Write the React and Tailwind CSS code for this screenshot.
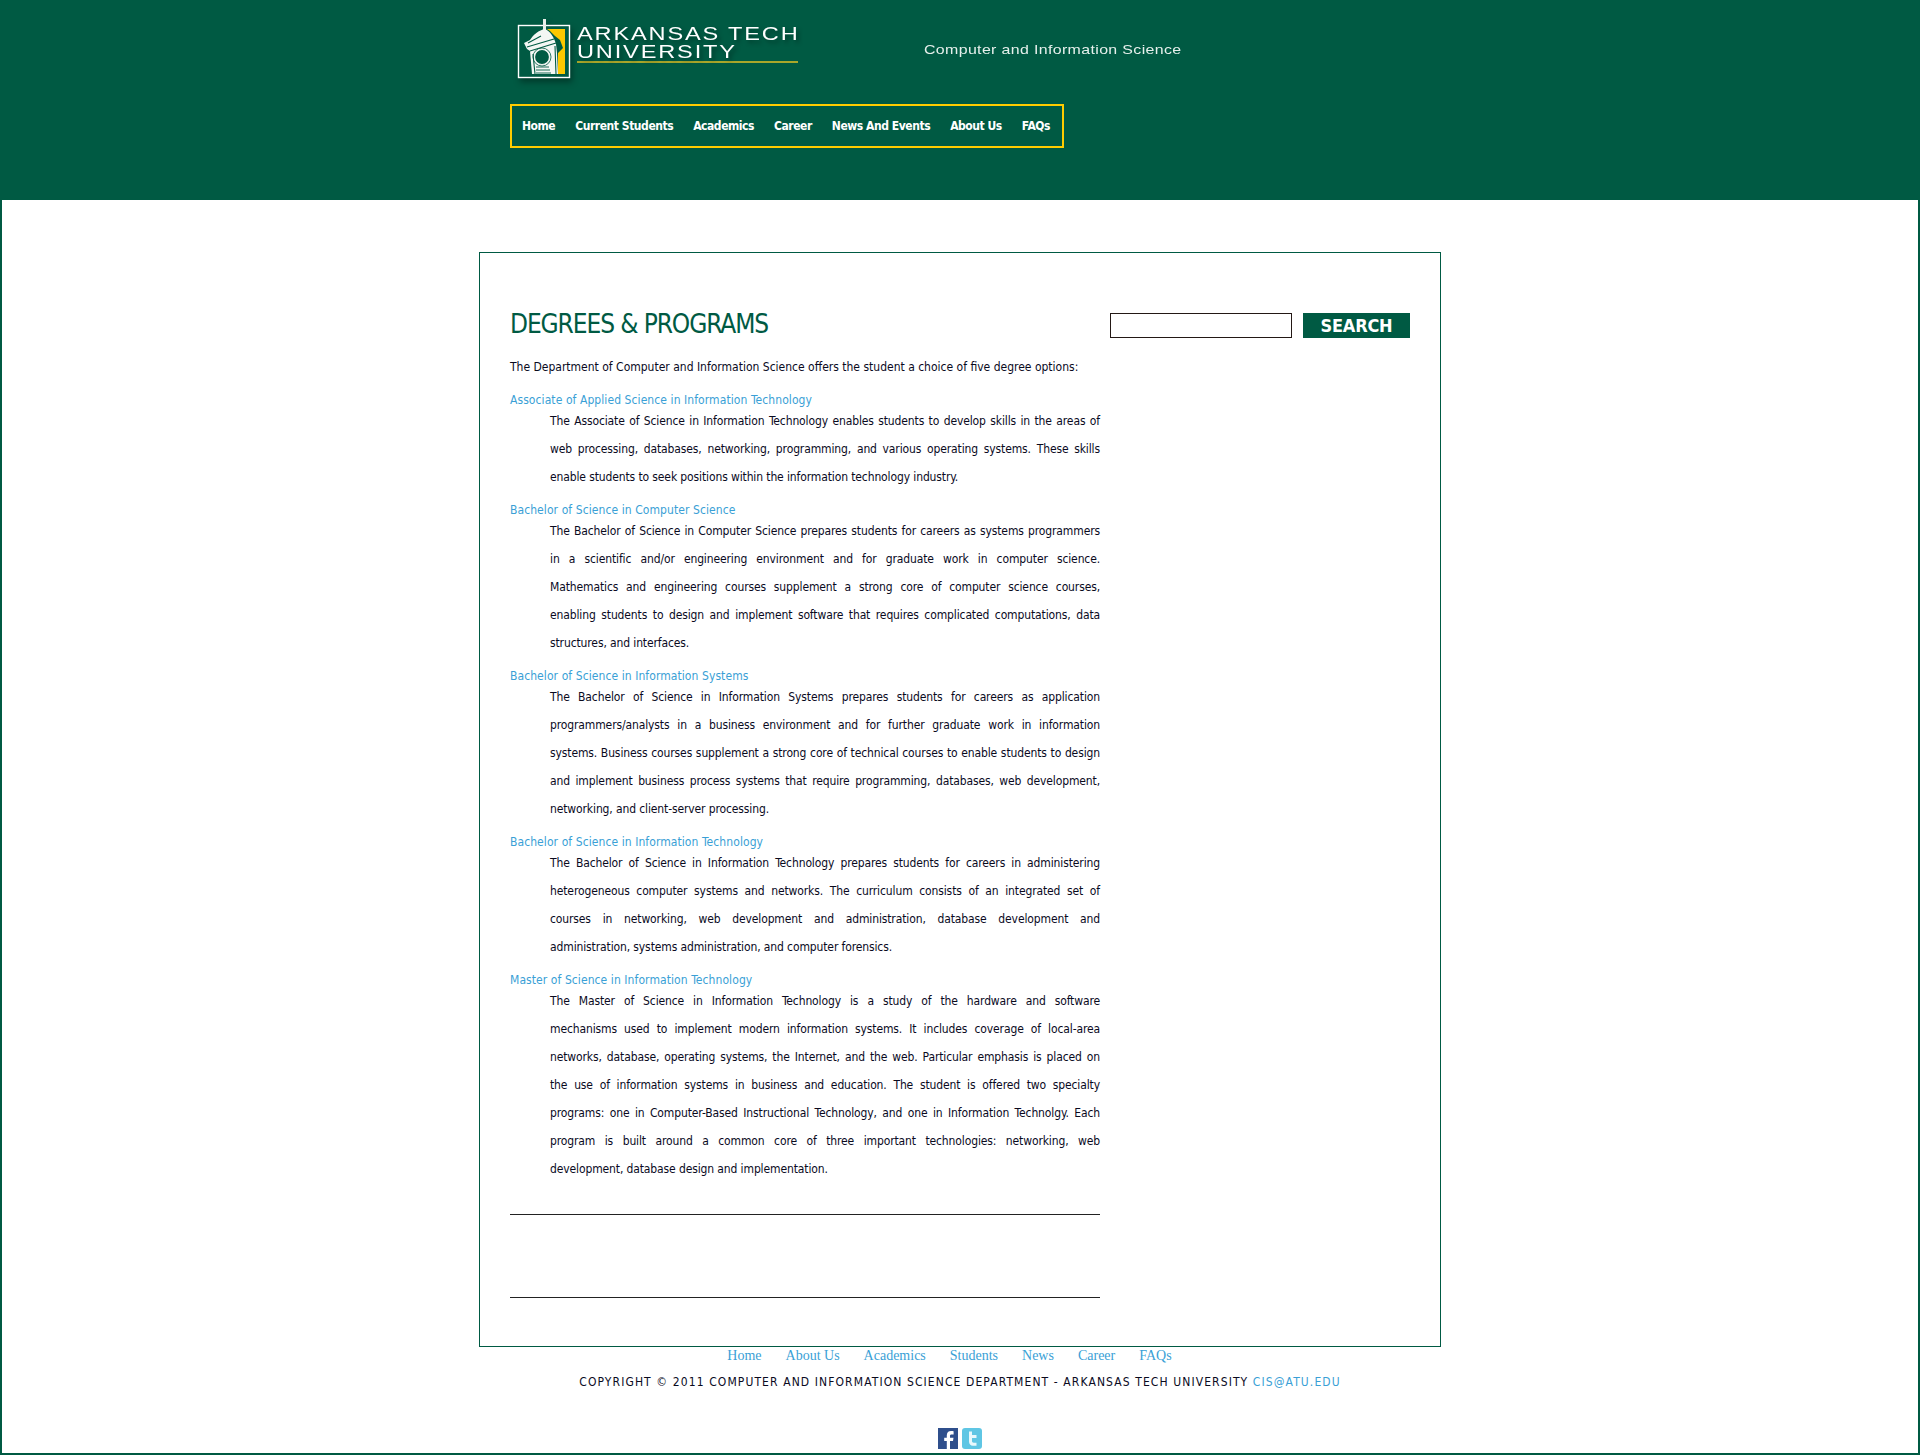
const navLinks = ['Home', 'Current Students', 'Academics', 'Career', 'News And Events', 'About Us', 'FAQs'];
const footerLinks = ['Home', 'About Us', 'Academics', 'Students', 'News', 'Career', 'FAQs'];

const programs = [
  {
    title: 'Associate of Applied Science in Information Technology',
    lines: [
      'The Associate of Science in Information Technology enables students to develop skills in the areas of',
      'web processing, databases, networking, programming, and various operating systems. These skills',
      'enable students to seek positions within the information technology industry.',
    ],
  },
  {
    title: 'Bachelor of Science in Computer Science',
    lines: [
      'The Bachelor of Science in Computer Science prepares students for careers as systems programmers',
      'in a scientific and/or engineering environment and for graduate work in computer science.',
      'Mathematics and engineering courses supplement a strong core of computer science courses,',
      'enabling students to design and implement software that requires complicated computations, data',
      'structures, and interfaces.',
    ],
  },
  {
    title: 'Bachelor of Science in Information Systems',
    lines: [
      'The Bachelor of Science in Information Systems prepares students for careers as application',
      'programmers/analysts in a business environment and for further graduate work in information',
      'systems. Business courses supplement a strong core of technical courses to enable students to design',
      'and implement business process systems that require programming, databases, web development,',
      'networking, and client-server processing.',
    ],
  },
  {
    title: 'Bachelor of Science in Information Technology',
    lines: [
      'The Bachelor of Science in Information Technology prepares students for careers in administering',
      'heterogeneous computer systems and networks. The curriculum consists of an integrated set of',
      'courses in networking, web development and administration, database development and',
      'administration, systems administration, and computer forensics.',
    ],
  },
  {
    title: 'Master of Science in Information Technology',
    lines: [
      'The Master of Science in Information Technology is a study of the hardware and software',
      'mechanisms used to implement modern information systems. It includes coverage of local-area',
      'networks, database, operating systems, the Internet, and the web. Particular emphasis is placed on',
      'the use of information systems in business and education. The student is offered two specialty',
      'programs: one in Computer-Based Instructional Technology, and one in Information Technolgy. Each',
      'program is built around a common core of three important technologies: networking, web',
      'development, database design and implementation.',
    ],
  },
];

function TowerLogo() {
  return (
    <svg width="64" height="68" viewBox="0 0 64 68" className="shrink-0 drop-shadow-[2px_4px_3px_rgba(0,0,0,0.35)]">
      <rect x="6.500" y="9.500" width="51" height="52" fill="#005a43" stroke="#fff" strokeWidth="1.400" />
      <path d="M35 13h18v45h-7V37l5-5-3-8-5-4-5-5z" fill="#fdc800" />
      <path d="M31 3h3v11h-3z" fill="#e8efe9" />
      <path d="M33 13c-6 1-12 6-15 11l-6 3 3 6 3 2 2 23h26l-1-21-1-9c-2-7-6-13-11-15z" fill="#f4f7f4" />
      <path d="M16 27l13-7M15 31l27-8M18 35l26-8M21 38l2 20M43 30l1 28" stroke="#005a43" strokeWidth="1.100" fill="none" />
      <circle cx="30" cy="41" r="7.500" fill="#005a43" stroke="#f4f7f4" strokeWidth="1.200" />
      <circle cx="30" cy="41" r="9" fill="none" stroke="#005a43" strokeWidth="0.800" />
      <path d="M24 51h13M24 54h14M24 57h15" stroke="#005a43" strokeWidth="0.900" />
    </svg>
  );
}

function FacebookIcon() {
  return (
    <svg width="20" height="21" viewBox="0 0 20 21">
      <rect width="20" height="21" fill="#2f4f8c" />
      <path d="M12 21v-8h3l.5-3.300H12V8c0-1 .4-1.500 1.600-1.500h2V3.300C15 3.200 14 3 13 3c-2.500 0-4.200 1.500-4.200 4.300v2.400H6.200V13h2.600v8z" fill="#fff" />
    </svg>
  );
}

function TwitterIcon() {
  return (
    <svg width="20" height="21" viewBox="0 0 20 21">
      <rect width="20" height="21" rx="3" fill="#5fc6e4" />
      <path d="M7 3.500h3v3.500h4.500v3H10v3c0 1.200.6 1.700 1.800 1.700h2.700v3h-3.500C8.500 17.700 7 16.200 7 13.800z" fill="#e8f8fc" />
    </svg>
  );
}

function Program({ title, lines }) {
  return (
    <div className="mt-[12px]">
      <h3 className="text-[12px] leading-[14px] tracking-[0.08px] text-[#3a9fd6]">{title}</h3>
      <div className="pl-[40px]">
        {lines.map((line, i) => (
          <p
            key={i}
            className={`whitespace-nowrap text-[12px] leading-[28px] tracking-[-0.12px] text-[#0a0a1e] ${
              i < lines.length - 1 ? '[text-align-last:justify]' : ''
            }`}
          >
            {line}
          </p>
        ))}
      </div>
    </div>
  );
}

export default function App() {
  return (
    <div className="h-[1455px] overflow-hidden border-x-2 border-b-2 border-[#005a43] bg-white font-['DejaVu_Sans_Condensed','DejaVu_Sans',sans-serif]">
      <header className="h-[200px] bg-[#005a43] pl-[508px]">
        <div className="flex h-[104px] pt-[16px]">
          <div className="ml-[2px] flex items-start gap-[1px]">
            <TowerLogo />
            <div className="w-[221px] pt-[9px] font-['Liberation_Sans',sans-serif] text-[18px] leading-[18px] text-white [text-shadow:2px_3px_4px_rgba(0,0,0,0.35)]">
              <div className="origin-left scale-x-[1.31] whitespace-nowrap tracking-[1.400px]">ARKANSAS TECH</div>
              <div className="origin-left scale-x-[1.31] whitespace-nowrap tracking-[1.400px]">UNIVERSITY</div>
              <div className="h-[2px] bg-[#a9a62a]"></div>
            </div>
          </div>
          <div className="ml-[126px] origin-left scale-x-[1.18] whitespace-nowrap pt-[24px] font-['Liberation_Sans',sans-serif] text-[13.500px] tracking-[0.3px] text-[#e6f0ec]">
            Computer and Information Science
          </div>
        </div>
        <nav className="flex h-[44px] w-[554px] items-center gap-[20px] border-2 border-[#ffcc00] px-[10px]">
          {navLinks.map((link) => (
            <a key={link} className="whitespace-nowrap text-[12px] font-bold tracking-[-0.45px] text-white">
              {link}
            </a>
          ))}
        </nav>
      </header>

      <main className="mx-auto mt-[52px] h-[1095px] w-[962px] border border-[#005a43] px-[30px] pt-[54px]">
        <div className="flex justify-between">
          <div className="w-[590px]">
            <h1 className="text-[26px] leading-[34px] tracking-[-1.100px] text-[#005a43]">DEGREES &amp; PROGRAMS</h1>
            <p className="mt-[19px] text-[12px] leading-[14px] text-[#0a0a1e]">
              The Department of Computer and Information Science offers the student a choice of five degree options:
            </p>
            <div className="mt-[19px] [&>div:first-child]:mt-0">
              {programs.map((program) => (
                <Program key={program.title} {...program} />
              ))}
            </div>
            <hr className="mt-[31px] border-[#222]" />
            <hr className="mt-[82px] border-[#222]" />
          </div>
          <div className="flex gap-[11px] pt-[6px]">
            <input className="h-[25px] w-[182px] border border-[#231815] bg-white" />
            <button className="h-[25px] w-[107px] bg-[#005a43] text-[18px] leading-[25px] font-bold tracking-[-0.2px] text-white">
              SEARCH
            </button>
          </div>
        </div>
      </main>

      <footer className="text-center">
        <div className="flex h-[17px] justify-center gap-[24px] pr-[21px] font-['Liberation_Serif',serif] text-[14px] leading-[17px] text-[#3a9fd6]">
          {footerLinks.map((link) => (
            <a key={link}>{link}</a>
          ))}
        </div>
        <p className="mt-[11px] text-[12px] leading-[14px] tracking-[1.100px] text-[#0a0a1e]">
          COPYRIGHT © 2011 COMPUTER AND INFORMATION SCIENCE DEPARTMENT - ARKANSAS TECH UNIVERSITY{' '}
          <a className="text-[#3a9fd6]">CIS@ATU.EDU</a>
        </p>
        <div className="mt-[39px] flex justify-center gap-[4px]">
          <FacebookIcon />
          <TwitterIcon />
        </div>
      </footer>
    </div>
  );
}
